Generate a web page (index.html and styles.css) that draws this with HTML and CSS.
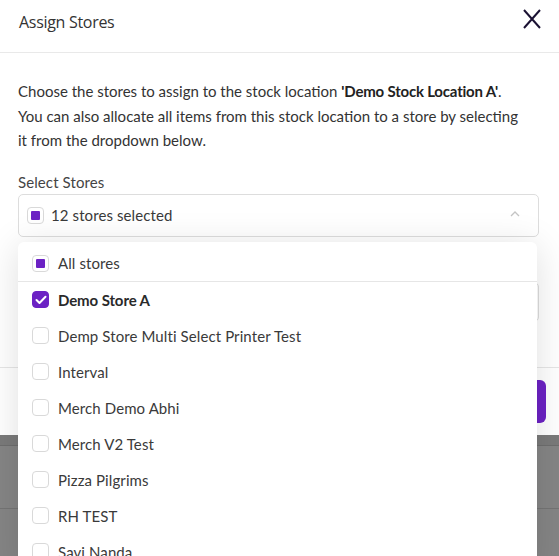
FILE: index.html
```html
<!DOCTYPE html>
<html>
<head>
<meta charset="utf-8">
<link rel="stylesheet" href="styles.css">
</head>
<body>
<div class="modal">
  <div class="modal-header">
    <h2 class="title">Assign Stores</h2>
    <span class="close">
      <svg width="20" height="20" viewBox="0 0 20 20"><path d="M2 1 L18 19 M18 1 L2 19" stroke="#1b1233" stroke-width="2" fill="none"/></svg>
    </span>
  </div>
  <div class="modal-body">
    <p class="desc">Choose the stores to assign to the stock location <b>'Demo Stock Location A'</b>. You can also allocate all items from this stock location to a store by selecting it from the dropdown below.</p>
    <div class="field-label">Select Stores</div>
    <div class="select-wrap">
      <div class="select">
        <span class="cb partial"><span class="dot"></span></span>
        <span class="select-text">12 stores selected</span>
        <svg class="chev" width="10" height="6" viewBox="0 0 10 6"><path d="M1 5 L5 1 L9 5" stroke="#c4c4c4" stroke-width="1.3" fill="none"/></svg>
      </div>
      <div class="dropdown">
        <div class="opt all"><span class="cb partial"><span class="dot"></span></span><span>All stores</span></div>
        <div class="opt sel"><span class="cb checked"><svg width="12" height="10" viewBox="0 0 12 10"><path d="M1.5 5 L4.5 8 L10.5 1.8" stroke="#fff" stroke-width="2" fill="none" stroke-linecap="round" stroke-linejoin="round"/></svg></span><span>Demo Store A</span></div>
        <div class="opt"><span class="cb"></span><span>Demp Store Multi Select Printer Test</span></div>
        <div class="opt"><span class="cb"></span><span>Interval</span></div>
        <div class="opt"><span class="cb"></span><span>Merch Demo Abhi</span></div>
        <div class="opt"><span class="cb"></span><span>Merch V2 Test</span></div>
        <div class="opt"><span class="cb"></span><span>Pizza Pilgrims</span></div>
        <div class="opt"><span class="cb"></span><span>RH TEST</span></div>
        <div class="opt"><span class="cb"></span><span>Savi Nanda</span></div>
      </div>
    </div>
    <div class="select second"></div>
  </div>
  <div class="modal-footer">
    <button class="primary">Assign</button>
  </div>
</div>
<div class="backdrop">
  <div class="bd-band"></div>
  <div class="bd-row"></div>
</div>
</body>
</html>
```
FILE: styles.css
```css
* { box-sizing: border-box; }
html, body { margin: 0; padding: 0; }
body {
  width: 559px;
  height: 556px;
  overflow: hidden;
  font-family: Lato, "Open Sans", sans-serif;
  color: #333;
  background: #858585;
}
.modal {
  background: #fff;
  height: 435px;
  position: relative;
}
.modal-header {
  height: 53px;
  border-bottom: 1px solid #e9e9e9;
  display: flex;
  align-items: center;
  justify-content: space-between;
  padding: 0 17px 8px 19px;
}
.title {
  margin: 0;
  font-size: 16px;
  font-weight: 400;
  color: #333;
  font-family: "Open Sans", Lato, sans-serif;
  letter-spacing: -0.3px;
}
.close { display: flex; margin-top: -6px; }
.modal-body {
  padding: 26px 20px 0 18px;
  height: 314px;
}
.desc {
  margin: 0;
  max-width: 506px;
  font-size: 15px;
  letter-spacing: 0;
  line-height: 24.5px;
  color: #333;
}
.desc b { font-weight: 700; color: #222; letter-spacing: -0.2px; }
.field-label {
  margin-top: 19px;
  font-size: 15px;
  letter-spacing: 0.1px;
  line-height: 20px;
  color: #444;
}
.select-wrap { position: relative; margin-top: 2px; }
.select {
  height: 43px;
  border: 1px solid #ddd;
  border-radius: 5px;
  display: flex;
  align-items: center;
  padding: 0 18px 0 8px;
  font-size: 15px;
  letter-spacing: 0.1px;
  color: #3a3a3a;
}
.select-text { flex: 1; margin-left: 7px; }
.chev { margin-top: -2px; }
.second { margin-top: 45px; height: 40px; }
.cb {
  width: 17px;
  height: 17px;
  border: 1px solid #d9d9d9;
  border-radius: 4px;
  background: #fff;
  display: inline-flex;
  align-items: center;
  justify-content: center;
  flex: none;
}
.cb .dot { width: 9px; height: 9px; background: #6c22c4; border-radius: 1px; }
.cb.checked { background: #6c22c4; border-color: #6c22c4; }
.dropdown {
  position: absolute;
  top: 48px;
  left: 0;
  width: 519px;
  height: 330px;
  background: #fff;
  border-radius: 6px;
  box-shadow: 0 4px 36px rgba(0,0,0,0.13);
  padding-top: 4px;
  z-index: 5;
}
.opt {
  height: 36px;
  display: flex;
  align-items: center;
  padding-left: 14px;
  gap: 9px;
  font-size: 15px;
  letter-spacing: 0.1px;
  color: #3a3a3a;
}
.opt.all { border-bottom: 1px solid #e6e6e6; }
.opt.sel { font-weight: 700; color: #2a2a2a; letter-spacing: -0.1px; }
.modal-footer {
  border-top: 1px solid #e6e6e6;
  display: flex;
  justify-content: flex-end;
  padding: 12px 13px 0 0;
}
.primary {
  height: 43px;
  padding: 0 24px;
  border: none;
  border-radius: 6px;
  background: #6c22c4;
  color: #fff;
  font-family: Lato, sans-serif;
  font-size: 14px;
  font-weight: 700;
}
.backdrop { height: 121px; }
.bd-band { height: 11px; background: #7a7a7a; border-bottom: 1px solid #6e6e6e; }
.bd-row { height: 63px; border-bottom: 1px solid #747474; }
```
